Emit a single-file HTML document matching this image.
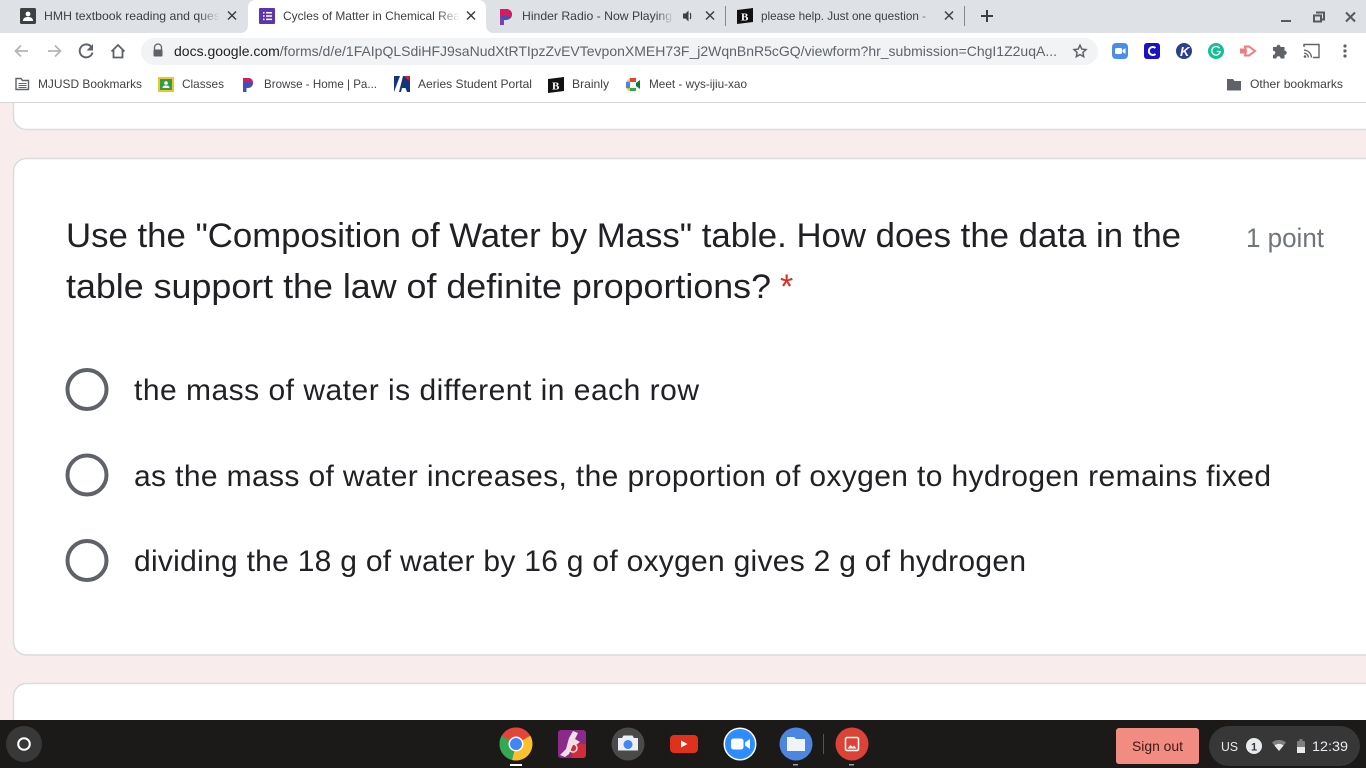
<!DOCTYPE html>
<html><head><meta charset="utf-8"><style>
html,body{margin:0;padding:0;width:1366px;height:768px;overflow:hidden;background:#f8ecec}
svg{position:absolute;left:0;top:0;display:block}
text{font-family:"Liberation Sans",sans-serif}
.t{font-size:12px;fill:#3c4043}
.b{font-size:12px;fill:#3f4245}
.q{font-size:34px;fill:#202124}
.o{font-size:30px;fill:#202124}
</style></head><body>
<svg width="1366" height="768" viewBox="0 0 1366 768" xmlns="http://www.w3.org/2000/svg">
<defs>
<linearGradient id="fa" x1="0" x2="1"><stop offset="0" stop-color="#dee1e6" stop-opacity="0"/><stop offset="1" stop-color="#dee1e6"/></linearGradient>
<linearGradient id="fb" x1="0" x2="1"><stop offset="0" stop-color="#fff" stop-opacity="0"/><stop offset="1" stop-color="#fff"/></linearGradient>
</defs>
<!-- page -->
<rect x="0" y="102" width="1366" height="620" fill="#f8ecec"/>
<rect x="13.5" y="60" width="1400" height="69.5" rx="13" fill="#fff" stroke="#dadce0" stroke-width="1.5"/>
<rect x="13.5" y="158.5" width="1400" height="496.5" rx="13" fill="#fff" stroke="#dadce0" stroke-width="1.5"/>
<rect x="13.5" y="683.5" width="1400" height="120" rx="13" fill="#fff" stroke="#dadce0" stroke-width="1.5"/>

<!-- chrome -->
<rect x="0" y="0" width="1366" height="33" fill="#dee1e6"/>
<rect x="0" y="33" width="1366" height="69" fill="#fff"/>
<rect x="0" y="102" width="1366" height="1" fill="#d4d6da"/>
<path d="M240 33c5 0 8-3 8-8V8c0-5 3-8 8-8h222c5 0 8 3 8 8v17c0 5 3 8 8 8z" fill="#fff"/>

<!-- tab 1 -->
<rect x="20" y="8" width="16" height="16" rx="1.5" fill="#3c4043"/>
<circle cx="28" cy="14" r="2.4" fill="#fff"/><path d="M23 21c0-3 2-4 5-4s5 1 5 4z" fill="#fff"/>
<text x="44" y="20" class="t" textLength="176" lengthAdjust="spacingAndGlyphs">HMH textbook reading and ques</text>
<rect x="198" y="6" width="22" height="20" fill="url(#fa)"/>
<path d="M228 11.500l8 8M236 11.500l-8 8" stroke="#3c4043" stroke-width="1.500"/>
<!-- tab 2 -->
<rect x="259" y="8" width="16" height="16" rx="1" fill="#5e35b1"/>
<path d="M263 12h1.500v1.500H263zM263 15.300h1.500v1.500H263zM263 18.600h1.500v1.500H263zM266 12h6v1.500h-6zM266 15.300h6v1.500h-6zM266 18.600h6v1.500h-6z" fill="#fff"/>
<text x="283" y="20" class="t" textLength="177" lengthAdjust="spacingAndGlyphs">Cycles of Matter in Chemical Rea</text>
<rect x="438" y="6" width="22" height="20" fill="url(#fb)"/>
<path d="M467 11.500l8 8M475 11.500l-8 8" stroke="#3c4043" stroke-width="1.500"/>
<!-- tab 3 -->
<path d="M500 9h6c4 0 6 2.500 6 5.500s-2.500 5.500-6 5.500h-2v5h-4z" fill="#3f51b5"/><path d="M500 9h6c4 0 6 2.500 6 5.500 0 1-.3 2-1 3l-7-2.500-4 2z" fill="#d81b60"/><path d="M500 17l4 3v5h-4z" fill="#7e3fb5"/>
<text x="522" y="20" class="t" textLength="150" lengthAdjust="spacingAndGlyphs">Hinder Radio - Now Playing</text>
<rect x="656" y="6" width="18" height="20" fill="url(#fa)"/>
<path d="M683 13.500h2.500l3-3v11l-3-3H683z" fill="#3c4043"/><path d="M690 13c1 1.500 1 4.500 0 6" stroke="#3c4043" stroke-width="1.200" fill="none"/>
<path d="M706 11.500l8 8M714 11.500l-8 8" stroke="#3c4043" stroke-width="1.500"/>
<rect x="725" y="6" width="1" height="20" fill="#85888c"/>
<!-- tab 4 -->
<path d="M737 10l16-2v14l-16 2z" fill="#111"/><text x="741" y="20.500" style="font-size:11px;font-weight:bold;fill:#fff;font-family:'Liberation Serif',serif">B</text>
<text x="761" y="20" class="t" textLength="165" lengthAdjust="spacingAndGlyphs">please help. Just one question -</text>
<rect x="918" y="6" width="16" height="20" fill="url(#fa)"/>
<path d="M945 11.500l8 8M953 11.500l-8 8" stroke="#3c4043" stroke-width="1.500"/>
<rect x="964" y="6" width="1" height="20" fill="#85888c"/>
<path d="M987 10v12M981 16h12" stroke="#3c4043" stroke-width="2"/>
<!-- window -->
<rect x="1281" y="20" width="10" height="2" fill="#555a5f"/>
<path d="M1316 12.500h8v7h-2.500M1314 15.500h7v6h-7z" stroke="#555a5f" stroke-width="2" fill="none"/>
<path d="M1346 12.500l9 9M1355 12.500l-9 9" stroke="#555a5f" stroke-width="2"/>

<!-- toolbar -->
<path d="M28 51H16M21 45.500l-5.500 5.500 5.500 5.500" stroke="#b4b6b9" stroke-width="1.800" fill="none"/>
<path d="M48 51h12M55 45.500l5.500 5.500-5.500 5.500" stroke="#b4b6b9" stroke-width="1.800" fill="none"/>
<path d="M91 46.500a6.500 6.500 0 1 0 1.500 6" stroke="#5f6368" stroke-width="1.900" fill="none"/><path d="M93 44v6.500h-6.500z" fill="#5f6368"/>
<path d="M111.500 51.500L118 45l6.500 6.500M113.500 50v7.500h9V50" stroke="#5f6368" stroke-width="1.800" fill="none"/>
<rect x="141" y="38" width="957" height="27" rx="13.500" fill="#f1f3f4"/>
<path d="M154.500 50v-2.500a3.500 3.500 0 0 1 7 0V50" stroke="#5f6368" stroke-width="1.300" fill="none"/><rect x="153.500" y="49.500" width="9" height="7" rx="1" fill="#5f6368"/>
<text x="174" y="56" style="font-size:14px" textLength="883" lengthAdjust="spacingAndGlyphs"><tspan fill="#202124">docs.google.com</tspan><tspan fill="#5f6368">/forms/d/e/1FAIpQLSdiHFJ9saNudXtRTIpzZvEVTevponXMEH73F_j2WqnBnR5cGQ/viewform?hr_submission=ChgI1Z2uqA...</tspan></text>
<path d="M1080 45.200l1.800 3.900 4.200.5-3.100 2.900.8 4.200-3.700-2.100-3.700 2.100.8-4.200-3.100-2.900 4.200-.5z" stroke="#5f6368" stroke-width="1.500" fill="none"/>
<!-- extensions -->
<rect x="1112" y="43" width="16" height="16" rx="4" fill="#4a8ee8"/><rect x="1115" y="48" width="7" height="6" rx="1.500" fill="#fff"/><path d="M1122.500 50l3-2v6l-3-2z" fill="#fff"/>
<rect x="1144" y="43" width="16" height="16" rx="3" fill="#1a12c4"/><path d="M1155.500 48a4 4 0 1 0 0 6" stroke="#fff" stroke-width="2" fill="none"/>
<circle cx="1184" cy="51" r="8" fill="#2c3e8f"/><text x="1180" y="56" style="font-size:13px;font-weight:bold;font-style:italic;fill:#fff">K</text>
<circle cx="1216" cy="51" r="8" fill="#15bf94"/><path d="M1219.500 48.200a4.300 4.300 0 1 0 .8 3.300h-3.500" stroke="#fff" stroke-width="1.300" fill="none"/>
<path d="M1245 46.500h4l6 4.500-6 4.500h-4l1-4.500z" fill="none" stroke="#f27c7c" stroke-width="2"/><rect x="1240" y="48.500" width="5" height="5" fill="#f27c7c"/>
<path d="M1273 47h3.500c0-3 4-3 4 0h4v3.800c3-.4 3 4.400 0 4v3.700h-4c.4-3-4.400-3-4 0H1273v-3.700c3 .4 3-4.400 0-4z" fill="#5f6368"/>
<path d="M1304 47v-2.500h15v13h-6" stroke="#5f6368" stroke-width="1.400" fill="none"/><path d="M1304 50a8 8 0 0 1 7.500 7.500M1304 53a5 5 0 0 1 4.500 4.500" stroke="#5f6368" stroke-width="1.300" fill="none"/><circle cx="1305" cy="56.500" r="1.300" fill="#5f6368"/>
<circle cx="1345" cy="46" r="1.600" fill="#5f6368"/><circle cx="1345" cy="51" r="1.600" fill="#5f6368"/><circle cx="1345" cy="56" r="1.600" fill="#5f6368"/>

<!-- bookmarks -->
<path d="M16 78.500h5l1.500 2h6v9H16z" fill="none" stroke="#5f6368" stroke-width="1.400"/><path d="M18.500 83.500h8M18.500 85.500h8M18.500 87.500h8" stroke="#5f6368" stroke-width="1"/>
<text x="38" y="88" class="b" textLength="104" lengthAdjust="spacingAndGlyphs">MJUSD Bookmarks</text>
<rect x="158" y="77" width="16" height="15" fill="#f4c430"/><rect x="160" y="79" width="12" height="11" fill="#2f9e44"/><circle cx="166" cy="83" r="1.800" fill="#fff"/><path d="M162.500 88c0-2 1.500-2.500 3.500-2.500s3.500.5 3.500 2.500z" fill="#fff"/>
<text x="182" y="88" class="b" textLength="42" lengthAdjust="spacingAndGlyphs">Classes</text>
<path d="M243 78h5c3.500 0 5 2.200 5 5s-2 5-5 5h-1.500v4H243z" fill="#3f51b5"/><path d="M243 78h5c3.500 0 5 2.200 5 5l-6-2-4 2z" fill="#d81b60"/>
<text x="264" y="88" class="b" textLength="113" lengthAdjust="spacingAndGlyphs">Browse - Home | Pa...</text>
<rect x="394" y="76" width="16" height="16" fill="#fff"/><path d="M394 76h6l-6 16zM410 76v16h-3l-1.500-4h-3.500l-1 4h-2l4-16z" fill="#12357e"/><path d="M404 76h6l-1 5z" fill="#d0202e"/>
<text x="418" y="88" class="b" textLength="114" lengthAdjust="spacingAndGlyphs">Aeries Student Portal</text>
<path d="M548 79l16-2v14l-16 2z" fill="#111"/><text x="552" y="89.500" style="font-size:11px;font-weight:bold;fill:#fff;font-family:'Liberation Serif',serif">B</text>
<text x="572" y="88" class="b" textLength="37" lengthAdjust="spacingAndGlyphs">Brainly</text>
<path d="M626 82l4-4h6v4h-6v6h6v3h-7l-3-3z" fill="#fbbc04"/><path d="M626 82h4v6h-4z" fill="#4285f4"/><path d="M630 88h6v3h-6z" fill="#34a853"/><path d="M636 78v4h-6v-4z" fill="#ea4335"/><path d="M636 83l4-3v9l-4-3z" fill="#00832d"/><rect x="630" y="82" width="6" height="6" fill="#fff"/>
<text x="649" y="88" class="b" textLength="98" lengthAdjust="spacingAndGlyphs">Meet - wys-ijiu-xao</text>
<path d="M1227 79h6l1.500 2h6.500v9.500h-14z" fill="#5f6368"/>
<text x="1250" y="88" class="b" textLength="93" lengthAdjust="spacingAndGlyphs">Other bookmarks</text>

<!-- question -->
<text x="66" y="247" class="q" textLength="1115" lengthAdjust="spacingAndGlyphs">Use the "Composition of Water by Mass" table. How does the data in the</text>
<text x="66" y="298" class="q" textLength="705" lengthAdjust="spacingAndGlyphs">table support the law of definite proportions?</text>
<text x="780" y="298" style="font-size:34px;fill:#d93025">*</text>
<text x="1246" y="247" textLength="78" lengthAdjust="spacingAndGlyphs" style="font-size:27px;fill:#70757a">1 point</text>
<circle cx="87" cy="389.500" r="19.500" fill="none" stroke="#5f6368" stroke-width="4"/>
<circle cx="87" cy="475" r="19.500" fill="none" stroke="#5f6368" stroke-width="4"/>
<circle cx="87" cy="560.500" r="19.500" fill="none" stroke="#5f6368" stroke-width="4"/>
<text x="134" y="400" class="o" textLength="565" lengthAdjust="spacing">the mass of water is different in each row</text>
<text x="134" y="486" class="o" textLength="1137" lengthAdjust="spacing">as the mass of water increases, the proportion of oxygen to hydrogen remains fixed</text>
<text x="134" y="571" class="o" textLength="892" lengthAdjust="spacing">dividing the 18 g of water by 16 g of oxygen gives 2 g of hydrogen</text>

<!-- shelf -->
<rect x="0" y="720" width="1366" height="48" fill="#1b1a19"/>
<circle cx="24" cy="744" r="18" fill="#383838"/>
<circle cx="24" cy="744" r="5.800" fill="none" stroke="#fff" stroke-width="2"/>
<!-- chrome icon -->
<circle cx="516" cy="744" r="16.500" fill="#ea4335"/>
<path d="M516 744L530.300 735.800A16.500 16.500 0 0 1 512 760L516 744z" fill="#fbc02d"/>
<path d="M516 744L512 760A16.500 16.500 0 0 1 501.700 735.800z" fill="#34a853"/>
<path d="M501.700 735.800A16.500 16.500 0 0 1 516 727.500a16.500 16.500 0 0 1 14.300 8.300H516z" fill="#e2453a"/>
<circle cx="516" cy="744" r="7.500" fill="#fff"/><circle cx="516" cy="744" r="6" fill="#4285f4"/>
<rect x="510" y="764" width="12" height="2" fill="#fff"/>
<!-- app 2 -->
<rect x="558" y="730" width="28" height="28" rx="3" fill="#8b2a8b"/>
<path d="M572 744h14v11a3 3 0 0 1-3 3h-11z" fill="#d22b3b"/>
<path d="M560 755l6-6 3-11 4-7 5 2-3 6 5 3-4 3-3 0-4 9-4 3z" fill="#f3dfe6"/>
<circle cx="573" cy="748" r="4" fill="none" stroke="#f3dfe6" stroke-width="1.500"/>
<!-- camera -->
<circle cx="628" cy="744" r="16.500" fill="#4a4a4a"/>
<path d="M618 738h4l1.500-2.500h9L634 738h4v12.500h-20z" fill="#eceff1"/>
<circle cx="628" cy="744.500" r="4.500" fill="#4285f4"/>
<!-- youtube -->
<rect x="670" y="735" width="28" height="18" rx="4" fill="#e0301e"/>
<path d="M681 740.500l6.500 3.500-6.500 3.500z" fill="#fff"/>
<!-- zoom -->
<circle cx="740" cy="744" r="16.500" fill="#fff"/><circle cx="740" cy="744" r="15" fill="#2d8cff"/>
<rect x="731" y="738.500" width="12.500" height="11" rx="2.500" fill="#fff"/><path d="M745 742.500l5-3.500v10l-5-3.500z" fill="#fff"/>
<!-- files -->
<circle cx="796" cy="744" r="16.500" fill="#4c86e0"/>
<path d="M787 737h7l2 2h9v12h-18z" fill="#f1f3f4"/>
<rect x="793" y="764" width="5" height="1.500" fill="#9aa0a6"/>
<rect x="823" y="734" width="1" height="20" fill="#555"/>
<!-- gallery -->
<circle cx="852" cy="744" r="16.500" fill="#dc4236"/>
<rect x="845.500" y="737.500" width="13" height="13" rx="1.500" fill="none" stroke="#fff" stroke-width="1.500"/>
<path d="M847.500 748.500l3-3.500 2 2 1.500-1.500 2.500 3z" fill="#fff"/>
<rect x="849" y="764" width="5" height="1.500" fill="#9aa0a6"/>
<!-- sign out -->
<rect x="1116" y="728" width="83" height="36" rx="3" fill="#f28b82"/>
<text x="1132" y="751" textLength="51" lengthAdjust="spacingAndGlyphs" style="font-size:14px;fill:#3c1a18">Sign out</text>
<!-- tray -->
<rect x="1209" y="726" width="151" height="40" rx="20" fill="#373737"/>
<text x="1221" y="751" textLength="17" lengthAdjust="spacingAndGlyphs" style="font-size:13px;fill:#e8eaed">US</text>
<circle cx="1254" cy="746" r="8" fill="#e8eaed"/>
<text x="1251" y="750.500" style="font-size:11px;font-weight:bold;fill:#373737">1</text>
<path d="M1272 742.500a11 11 0 0 1 14 0l-7 8.500z" fill="#808080"/><path d="M1274.500 745.500a7 7 0 0 1 9 0l-4.500 5.500z" fill="#e8eaed"/>
<rect x="1297" y="741" width="8" height="12" rx="1" fill="#808080"/><rect x="1299.500" y="739" width="3" height="2" fill="#808080"/><rect x="1297" y="747" width="8" height="6" fill="#e8eaed"/>
<text x="1312" y="751" textLength="36" lengthAdjust="spacingAndGlyphs" style="font-size:14px;fill:#e8eaed">12:39</text>
</svg>
</body></html>
